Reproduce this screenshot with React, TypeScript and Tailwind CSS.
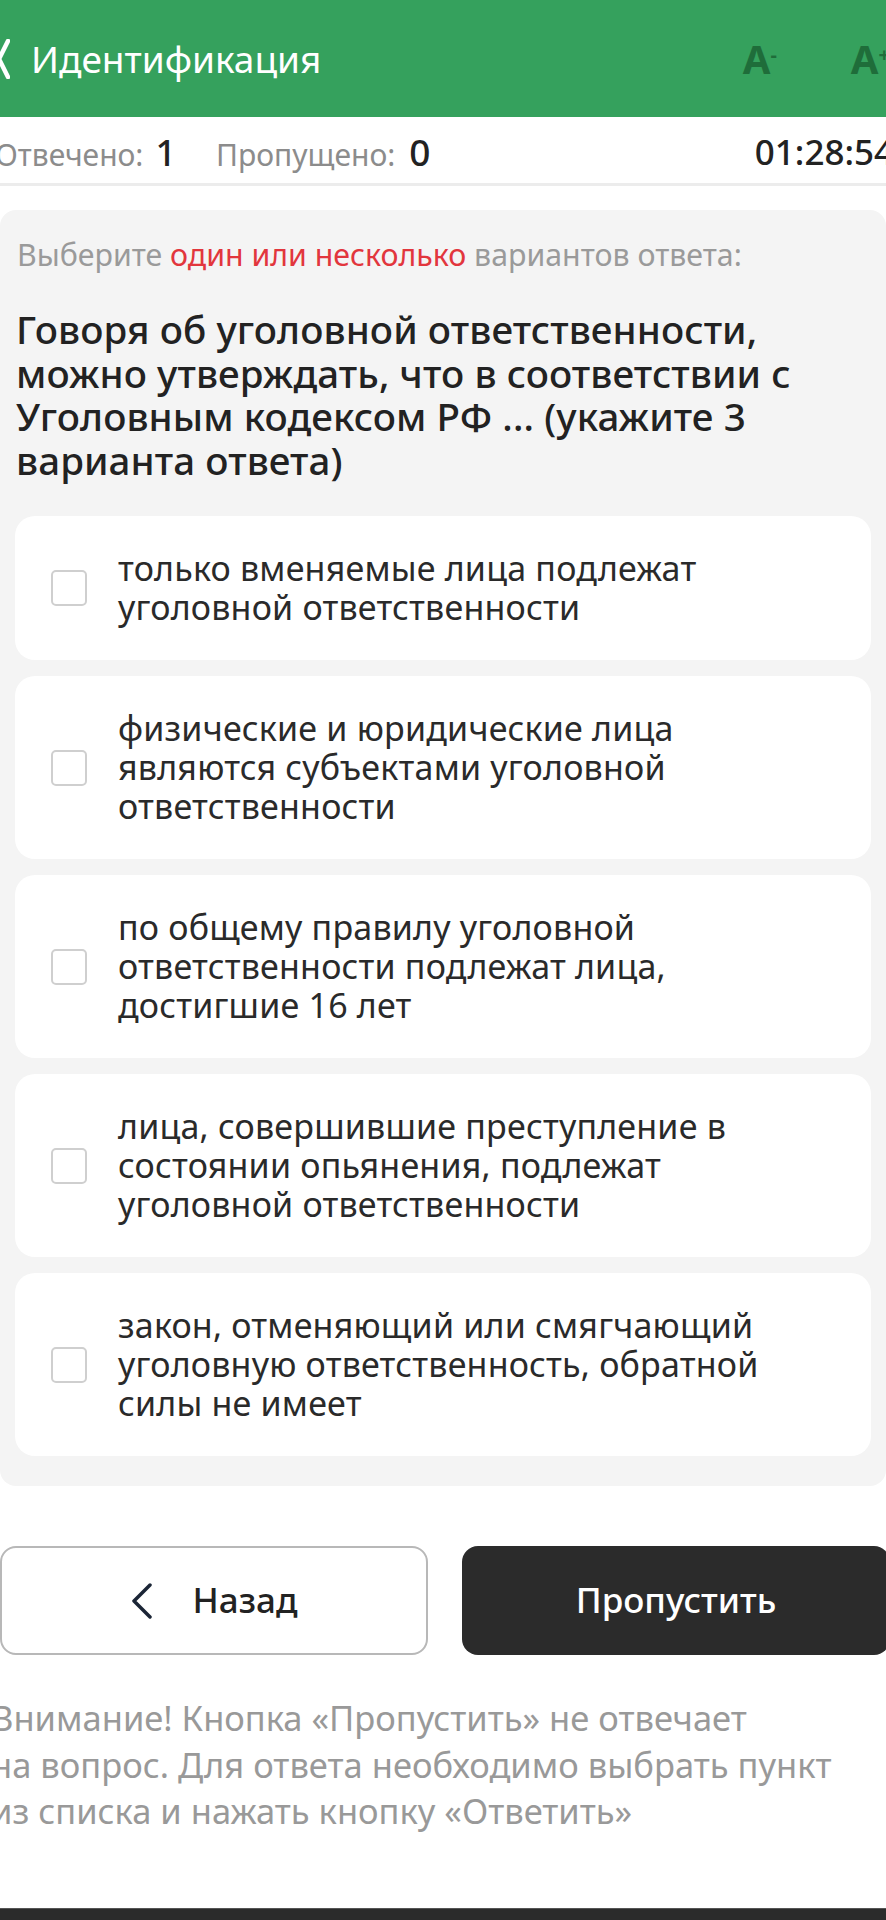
import React from "react";

const options: string[][] = [
  ["только вменяемые лица подлежат", "уголовной ответственности"],
  ["физические и юридические лица", "являются субъектами уголовной", "ответственности"],
  ["по общему правилу уголовной", "ответственности подлежат лица,", "достигшие 16 лет"],
  ["лица, совершившие преступление в", "состоянии опьянения, подлежат", "уголовной ответственности"],
  ["закон, отменяющий или смягчающий", "уголовную ответственность, обратной", "силы не имеет"],
];

export default function App() {
  return (
    <div
      className="w-[886px] h-[1920px] overflow-hidden bg-white flex flex-col"
      style={{ fontFamily: '"Noto Sans", "Liberation Sans", sans-serif' }}
    >
      {/* Header */}
      <div className="h-[117px] shrink-0 bg-[#35a15d] flex items-center">
        <svg width="12" height="40" viewBox="0 0 12 40" className="shrink-0 -ml-[2px]">
          <polyline points="10,2 1,20 10,38" fill="none" stroke="#ffffff" strokeWidth="4.5" strokeLinecap="round" strokeLinejoin="round" />
        </svg>
        <div className="ml-[21px] text-[37px] leading-none text-white whitespace-nowrap">Идентификация</div>
        <div className="ml-auto -mr-[4px] flex items-start text-[#1f6d3a] font-bold leading-none">
          <span className="text-[40px]">A</span>
          <span className="text-[20px] mt-[6px]">-</span>
          <span className="text-[40px] ml-[74px]">A</span>
          <span className="text-[20px] mt-[6px]">+</span>
        </div>
      </div>

      {/* Stats row */}
      <div className="h-[69px] shrink-0 flex items-center pt-[4px] border-b-[3px] border-[#ececec]">
        <div className="flex items-baseline whitespace-nowrap -ml-[5px]">
          <span className="text-[30px] text-[#8c8c8c]">Отвечено:</span>
          <span className="ml-[12px] text-[36px] font-medium text-[#222]">1</span>
          <span className="ml-[40px] text-[30px] text-[#8c8c8c]">Пропущено:</span>
          <span className="ml-[14px] text-[37px] font-medium text-[#222]">0</span>
        </div>
        <div className="ml-auto -mr-[8px] text-[35px] font-medium text-[#222] whitespace-nowrap">01:28:54</div>
      </div>

      {/* Question card */}
      <div className="mt-[24px] rounded-[16px] bg-[#f4f4f4] px-[15px] pt-[28px] pb-[30px] flex flex-col">
        <div className="pl-[2px] text-[30.3px] leading-[34px] text-[#9a9a9a] whitespace-nowrap">
          Выберите <span className="text-[#e2363d]">один или несколько</span> вариантов ответа:
        </div>
        <div className="mt-[36px] pl-[1px] text-[38.5px] tracking-[0.1px] leading-[43.5px] font-medium text-[#222] whitespace-nowrap">
          Говоря об уголовной ответственности,
          <br />
          можно утверждать, что в соответствии с
          <br />
          Уголовным кодексом РФ ... (укажите 3
          <br />
          варианта ответа)
        </div>
        <div className="mt-[34px] flex flex-col gap-[16px]">
          {options.map((lines, i) => (
            <div key={i} className="bg-white rounded-[20px] py-[33px] pl-[36px] flex items-center">
              <div className="w-[36px] h-[36px] shrink-0 rounded-[5px] border-2 border-[#cfcfcf] bg-white" />
              <div className="ml-[31px] text-[34px] tracking-[0.2px] leading-[39px] text-[#2a2a2a] whitespace-nowrap">
                {lines.map((l, j) => (
                  <div key={j}>{l}</div>
                ))}
              </div>
            </div>
          ))}
        </div>
      </div>

      {/* Buttons */}
      <div className="mt-[60px] flex gap-[34px]">
        <div className="w-[428px] h-[109px] shrink-0 rounded-[16px] border-2 border-[#b8b8b8] flex items-center justify-center">
          <svg width="22" height="36" viewBox="0 0 22 36" className="shrink-0">
            <polyline points="19,2 3,18 19,34" fill="none" stroke="#1b2536" strokeWidth="3.5" strokeLinecap="round" strokeLinejoin="round" />
          </svg>
          <span className="ml-[40px] text-[35px] font-medium text-[#222]">Назад</span>
        </div>
        <div className="flex-1 h-[109px] rounded-[16px] bg-[#2b2b2b] flex items-center justify-center -mr-[4px]">
          <span className="text-[35px] font-medium text-white">Пропустить</span>
        </div>
      </div>

      {/* Warning */}
      <div className="mt-[40px] -ml-[9px] text-[34.5px] leading-[46.5px] text-[#999999] whitespace-nowrap">
        Внимание! Кнопка «Пропустить» не отвечает
        <br />
        на вопрос. Для ответа необходимо выбрать пункт
        <br />
        из списка и нажать кнопку «Ответить»
      </div>

      <div className="mt-auto h-[12px] shrink-0 bg-[#2b2b2b] border-t border-[#555]" />
    </div>
  );
}
